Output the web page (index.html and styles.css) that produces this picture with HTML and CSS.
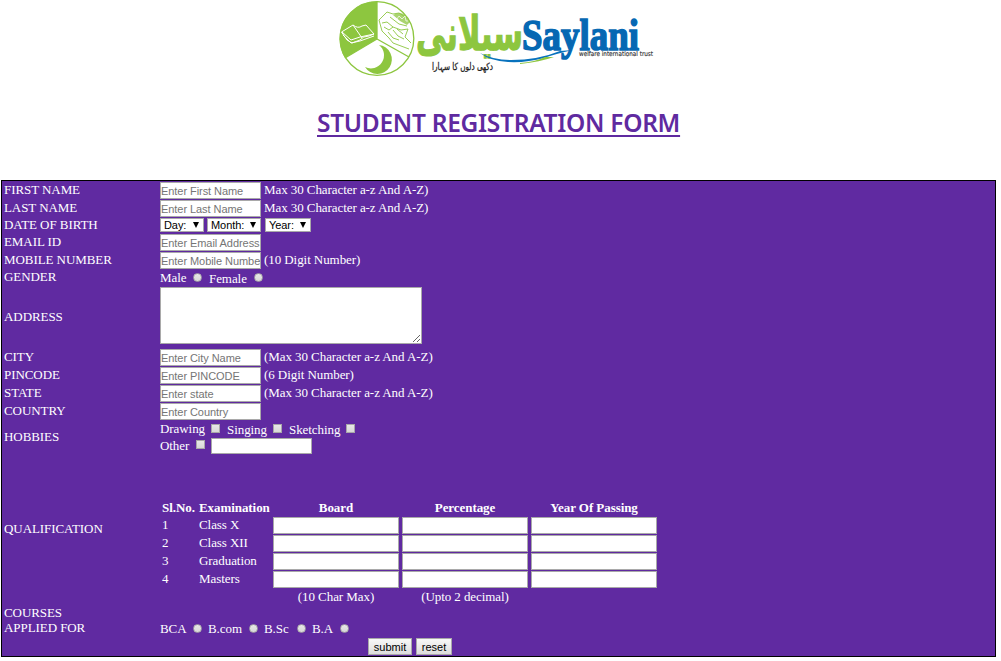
FILE: index.html
```html
<!DOCTYPE html>
<html lang="en">
<head>
<meta charset="utf-8">
<title>Student Registration Form</title>
<link rel="stylesheet" href="styles.css">
</head>
<body>
<header class="header">
<svg class="logo" width="320" height="80" viewBox="337 0 320 80">
  <circle cx="377" cy="38.500" r="37" fill="#fff"/>
  <path d="M377 39V1.500A37 37 0 0 0 345 58z" fill="#8dc63f"/>
  <path d="M377 39V1M377 39L345 58M377 39L409 57" stroke="#8dc63f" stroke-width="1.300" fill="none"/>
  <circle cx="377" cy="38.500" r="36.800" fill="none" stroke="#8dc63f" stroke-width="1.300"/>
  <path d="M341.500 32L353 25Q358 29 362 26L366 25L374 34L369 36Q363 36 360 40L352 43L347 40zM353 25L362 38M342 32L351 40L360 37L374 34M343 35L351 43L360 41L374 36" fill="none" stroke="#fff" stroke-width="1"/>
  <path d="M379 45A14.500 14.500 0 1 1 365 67A13.100 13.100 0 0 0 379 45" fill="#8dc63f"/>
  <path d="M379 20L387 12L393 14L399 13L407 18M379 20L382 31L389 38L393 43L409 49M382 23L387 22L393 27L389 30L384 27M393 27L401 30L408 29L405 37L411 43M390 17L399 24L407 26M388 32L393 38L399 40M393 30L398 36L404 39M397 29L403 34" fill="none" stroke="#8dc63f" stroke-width=".9"/>
  <path d="M393 15Q400 11 405 15L410 22L407 25L400 21z" fill="#8dc63f" opacity=".75"/>
  <path d="M394 17l3 2 2-3 3 3 3-3 1 5 2 0" stroke="#fff" stroke-width=".7" fill="none"/>
  <text class="logo-urdu" transform="translate(416 50) scale(1 1.25)" textLength="107" lengthAdjust="spacingAndGlyphs">سیلانی</text>
  <path d="M480 53Q493 60 511 60Q538 60 560 51L573 50Q555 54 544 58Q526 63 508 62Q490 61 480 53z" fill="#0872bd"/>
  <path d="M520 63Q535 62 545 57L554 57Q540 62 520 64z" fill="#8dc63f"/>
  <text class="logo-name" x="522" y="49.500" textLength="117" lengthAdjust="spacingAndGlyphs">Saylani</text>
  <text class="logo-sub" x="579" y="56" textLength="74" lengthAdjust="spacingAndGlyphs">welfare international trust</text>
  <text class="logo-motto" x="432" y="70" textLength="61" lengthAdjust="spacingAndGlyphs">دکھی دلوں کا سہارا</text>
</svg>
<h1 class="title">STUDENT REGISTRATION FORM</h1>
</header>
<form class="form">
  <div class="row"><label>FIRST NAME</label><div class="line"><input class="field" placeholder="Enter First Name"><span>Max 30 Character a-z And A-Z)</span></div></div>
  <div class="row"><label>LAST NAME</label><div class="line"><input class="field" placeholder="Enter Last Name"><span>Max 30 Character a-z And A-Z)</span></div></div>
  <div class="row row-date"><label>DATE OF BIRTH</label><div class="dates"><span class="pick">Day:<i></i></span><span class="pick pick-month">Month:<i></i></span><span class="pick">Year:<i></i></span></div></div>
  <div class="row"><label>EMAIL ID</label><div class="line"><input class="field" placeholder="Enter Email Address"></div></div>
  <div class="row"><label>MOBILE NUMBER</label><div class="line"><input class="field" placeholder="Enter Mobile Number"><span>(10 Digit Number)</span></div></div>
  <div class="row row-gender"><label>GENDER</label><div class="choices gender"><span>Male</span><input type="radio" class="radio"><span class="low">Female</span><input type="radio" class="radio"></div></div>
  <div class="row row-address"><label>ADDRESS</label><textarea class="area"></textarea></div>
  <div class="row"><label>CITY</label><div class="line"><input class="field" placeholder="Enter City Name"><span>(Max 30 Character a-z And A-Z)</span></div></div>
  <div class="row"><label>PINCODE</label><div class="line"><input class="field" placeholder="Enter PINCODE"><span>(6 Digit Number)</span></div></div>
  <div class="row"><label>STATE</label><div class="line"><input class="field" placeholder="Enter state"><span>(Max 30 Character a-z And A-Z)</span></div></div>
  <div class="row"><label>COUNTRY</label><div class="line"><input class="field" placeholder="Enter Country"></div></div>
  <div class="row row-hobbies"><label>HOBBIES</label><div>
    <div class="choices hobbies"><span>Drawing</span><input type="checkbox" class="check"><span class="low">Singing</span><input type="checkbox" class="check"><span class="low">Sketching</span><input type="checkbox" class="check"></div>
    <div class="choices other"><span>Other</span><input type="checkbox" class="check"><input class="field field-other"></div>
  </div></div>
  <div class="row row-qual"><label>QUALIFICATION</label>
    <div class="qual">
      <b>Sl.No.</b><b>Examination</b><b class="mid">Board</b><b class="mid">Percentage</b><b class="mid">Year Of Passing</b>
      <span class="item">1</span><span class="item">Class X</span><input class="cell"><input class="cell"><input class="cell">
      <span class="item">2</span><span class="item">Class XII</span><input class="cell"><input class="cell"><input class="cell">
      <span class="item">3</span><span class="item">Graduation</span><input class="cell"><input class="cell"><input class="cell">
      <span class="item">4</span><span class="item">Masters</span><input class="cell"><input class="cell"><input class="cell">
      <span></span><span></span><span class="mid item">(10 Char Max)</span><span class="mid item">(Upto 2 decimal)</span><span></span>
    </div>
  </div>
  <div class="row row-courses"><label>COURSES<br>APPLIED FOR</label><div class="choices courses"><span>BCA</span><input type="radio" class="radio"><span>B.com</span><input type="radio" class="radio"><span>B.Sc</span><input type="radio" class="radio"><span>B.A</span><input type="radio" class="radio"></div></div>
  <div class="actions"><button type="button" class="btn btn-submit">submit</button><button type="button" class="btn btn-reset">reset</button></div>
</form>
</body>
</html>
```
FILE: styles.css
```css
* { box-sizing: border-box; }
body { margin: 0; width: 1001px; height: 661px; overflow: hidden; background: #fff; }
.header { height: 180px; }
.logo { display: block; margin-left: 337px; overflow: visible; }
.logo-urdu { font: bold 38px "DejaVu Sans", sans-serif; fill: #8dc63f; stroke: #8dc63f; stroke-width: 1px; }
.logo-name { font: bold 45px "Liberation Serif", serif; fill: #0668b3; stroke: #0668b3; stroke-width: 1.6px; }
.logo-sub { font: 6.5px "DejaVu Sans", sans-serif; fill: #333; stroke: #333; stroke-width: .15px; }
.logo-motto { font: 10px "DejaVu Sans", sans-serif; fill: #222; stroke: #222; stroke-width: .3px; }
.title { margin: 26px 0 0 317px; width: 363px; white-space: nowrap; color: #5f2aa0; font: 600 24.5px/34px "Noto Sans", sans-serif; letter-spacing: -.29px; text-decoration: underline; text-decoration-thickness: 2px; text-underline-offset: 3px; }
.form { margin-left: 1px; width: 995px; height: 477px; border: 1px solid #000; background: #602aa1; color: #fff; font: 13px/15px "Liberation Serif", serif; letter-spacing: -.07px; }
.row { display: grid; grid-template-columns: 156px 1fr; height: 18px; align-items: center; padding-left: 2px; }
.row > label { white-space: nowrap; margin-bottom: 2px; }
.line { display: flex; gap: 3px; height: 18px; align-items: center; white-space: nowrap; }
.line > span { margin-bottom: 2px; }
.field, .cell, .area { display: block; margin: 0; appearance: none; border: 1px solid #a9a9a9; border-radius: 0; background: #fff; padding: 1px; outline: 0; }
.field { width: 101px; height: 17px; padding: 1px 0; font: 11px "Liberation Sans", sans-serif; letter-spacing: -.06px; }
.line .field { margin-top: 1px; }
.field::placeholder { color: #757575; opacity: 1; }
.row-date { height: 16px; }
.dates { display: grid; grid-template-columns: 47px 58px 46px; margin-bottom: 2px; }
.pick { width: 44px; height: 14px; border: 1px solid #a9a9a9; background: #fff; color: #000; display: flex; justify-content: space-between; align-items: center; padding: 0 4px 0 3px; font: 11px/12px "Liberation Sans", sans-serif; }
.pick-month { width: 54px; }
.pick:last-child { width: 46px; }
.pick i { border: 3.5px solid transparent; border-top: 6px solid #000; border-bottom: 0; }
.row-gender { height: 17px; }
.choices { display: grid; align-items: center; white-space: nowrap; }
.gender { grid-template-columns: 33px 16px 45px 10px; }
.low { padding-top: 2px; }
.radio, .check { appearance: none; display: block; width: 9px; height: 9px; margin: 0; background: linear-gradient(#e8e8e8, #d8d8d8); border: 1px solid #a8a8a8; }
.radio { border-radius: 50%; }
.row-address { height: 62px; align-items: start; }
.row-address > label { margin-top: 23px; }
.area { width: 262px; height: 57px; margin-top: 1px; resize: both; }
.row-hobbies { height: 34px; }
.hobbies { height: 17px; grid-template-columns: 51px 16px 46px 16px 57px 10px; }
.other { height: 17px; grid-template-columns: 36px 15px 101px; }
.other .check { margin-bottom: 2px; }
.field-other { height: 16px; margin-top: 1px; }
.row-qual { height: 150px; align-items: start; }
.row-qual > label { margin: 67px 0 0; }
.qual { display: grid; grid-template-columns: 37px 74px 129px 129px 129px; grid-template-rows: 17px repeat(4, 18px) 17px; align-items: center; margin: 45px 0 0 2px; white-space: nowrap; }
.mid { width: 126px; text-align: center; }
.item { margin-bottom: 1px; }
.cell { width: 126px; height: 17px; margin-top: 1px; }
.row-courses { height: 33px; }
.courses { grid-template-columns: 33px 15px 41px 15px 33px 15px 28px 10px; margin-top: 16px; }
.actions { display: flex; gap: 4px; padding: 1px 0 0 366px; }
.btn { height: 17px; border: 1px solid #a9a9a9; border-radius: 0; background: linear-gradient(#f8f8f8, #ddd); padding: 0; color: #000; font: 11px "Liberation Sans", sans-serif; }
.btn-submit { width: 44px; }
.btn-reset { width: 36px; }
```
